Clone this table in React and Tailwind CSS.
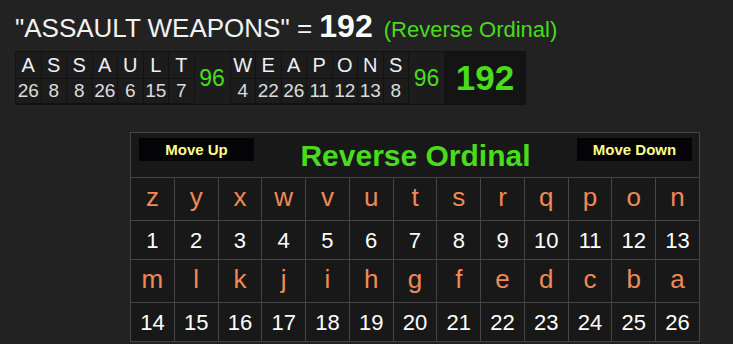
const word = (s, vals) => s.split('').map((ch, i) => ({ ch, v: vals[i] }));

const first = word('ASSAULT', [26, 8, 8, 26, 6, 15, 7]);
const second = word('WEAPONS', [4, 22, 26, 11, 12, 13, 8]);

const letters = 'zyxwvutsrqponmlkjihgfedcba'.split('');

const WordCells = ({ items }) => (
  <>
    {items.map((it, i) => (
      <div key={i} className="flex flex-col gap-px">
        <div className="flex h-[26px] w-[24.5px] items-center justify-center bg-[#1c1c1c] text-[20px] text-[#eaf0f6]">
          {it.ch}
        </div>
        <div className="flex h-[24px] w-[24.5px] items-center justify-center bg-[#1c1c1c] text-[19px] text-[#dcdcdc]">
          {it.v}
        </div>
      </div>
    ))}
  </>
);

const Sum = ({ value }) => (
  <div className="flex w-[35px] items-center justify-center bg-[#1c1c1c] text-[23px] text-[#48dc1c]">
    {value}
  </div>
);

export default function App() {
  const rows = [letters.slice(0, 13), letters.slice(13)];

  return (
    <div
      className="min-h-[344px] w-full bg-[#222222] pl-[15px] pt-[8px]"
      style={{ fontFamily: '"Liberation Sans", Arial, sans-serif' }}
    >
      {/* heading line */}
      <div className="flex items-baseline whitespace-nowrap leading-[1.15]">
        <span className="text-[26px] text-[#f2f2f2]">"ASSAULT WEAPONS" =&nbsp;</span>
        <span className="text-[32px] font-bold text-white">192</span>
        <span className="ml-[11px] text-[22px] text-[#48dc1c]">(Reverse Ordinal)</span>
      </div>

      {/* letter breakdown */}
      <div className="mt-[6px] flex w-fit gap-px bg-[#121212] p-px">
        <WordCells items={first} />
        <Sum value={96} />
        <WordCells items={second} />
        <Sum value={96} />
        <div className="flex w-[80px] items-center justify-center bg-[#141414] text-[35px] font-bold text-[#48dc1c]">
          192
        </div>
      </div>

      {/* cipher chart */}
      <div className="ml-[115px] mt-[27px] grid w-[570px] grid-cols-[repeat(13,minmax(0,1fr))] gap-px bg-[#454545] p-px">
        <div className="col-span-13 flex h-[44px] items-center justify-between bg-[#181818] pl-[8px] pr-[7px]">
          <button className="mb-auto mt-[5px] h-[23px] w-[115px] bg-[#030308] text-[15px] font-bold text-[#ffff88]">
            Move Up
          </button>
          <span className="text-[30px] font-bold text-[#48dc1c]">Reverse Ordinal</span>
          <button className="mb-auto mt-[5px] h-[23px] w-[115px] bg-[#030308] text-[15px] font-bold text-[#ffff88]">
            Move Down
          </button>
        </div>
        {rows.map((row, r) => (
          <div key={r} className="contents">
            {row.map((ch) => (
              <div
                key={ch}
                className="flex h-[42px] items-center justify-center bg-[#181818] pb-[3px] text-[26px] text-[#ef8a55]"
              >
                {ch}
              </div>
            ))}
            {row.map((ch, i) => (
              <div
                key={ch + 'n'}
                className="flex h-[38px] items-center justify-center bg-[#181818] text-[22px] text-white"
              >
                {r * 13 + i + 1}
              </div>
            ))}
          </div>
        ))}
      </div>
    </div>
  );
}
